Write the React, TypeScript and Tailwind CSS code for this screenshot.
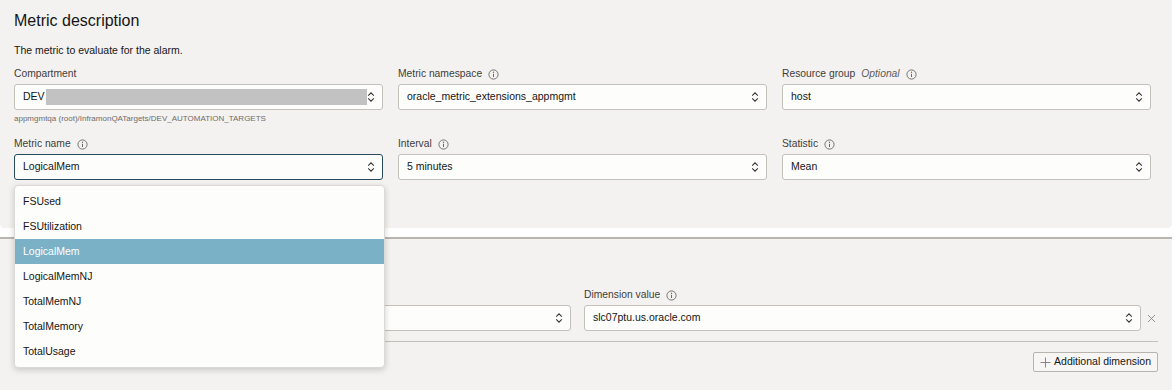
import React from "react";

const font = { fontFamily: '"Liberation Sans", Arial, sans-serif' };

function UpDown() {
  return (
    <svg width="8" height="12" viewBox="0 0 8 12" className="shrink-0">
      <path d="M1.2 4.6 L4 1.8 L6.8 4.6" fill="none" stroke="#3a3835" strokeWidth="1.1" />
      <path d="M1.2 7.4 L4 10.2 L6.8 7.4" fill="none" stroke="#3a3835" strokeWidth="1.1" />
    </svg>
  );
}

function Info() {
  return (
    <svg width="11" height="11" viewBox="0 0 11 11" className="shrink-0">
      <circle cx="5.5" cy="5.5" r="4.6" fill="none" stroke="#6b6864" strokeWidth="0.9" />
      <circle cx="5.5" cy="3.3" r="0.7" fill="#6b6864" />
      <path d="M5.5 4.8 V8" stroke="#6b6864" strokeWidth="1" />
    </svg>
  );
}

function Label({ text, info, optional }: { text?: string; info?: boolean; optional?: boolean }) {
  return (
    <div className="flex items-center gap-[6px] h-[12px] mb-[4px] text-[10.3px] leading-[12px] text-[#3f3d3a]">
      {text && <span>{text}</span>}
      {optional && <span className="italic text-[#5f5c58]">Optional</span>}
      {info && <Info />}
    </div>
  );
}

function Select({ value, focused, children }: { value?: string; focused?: boolean; children?: React.ReactNode }) {
  return (
    <div
      className={
        focused
          ? "flex items-center h-[26px] rounded-[3px] border-[1.5px] border-[#274a5c] bg-[#fdfdfc] pl-[8px] pr-[7px]"
          : "flex items-center h-[26px] rounded-[3px] border border-[#c4c0ba] bg-[#fdfdfc] pl-[8px] pr-[7px]"
      }
    >
      <div className="flex-1 flex items-center text-[10.5px] text-[#161513] overflow-hidden whitespace-nowrap">
        {children ?? value}
      </div>
      <UpDown />
    </div>
  );
}

const options = ["FSUsed", "FSUtilization", "LogicalMem", "LogicalMemNJ", "TotalMemNJ", "TotalMemory", "TotalUsage"];

export default function App() {
  return (
    <div className="w-[1175px] h-[390px] bg-white overflow-hidden" style={font}>
      {/* Metric description panel */}
      <div className="w-[1172px] bg-[#f3f2f1] rounded-b-[4px] px-[14px] pt-[11px] pb-[48px]">
        <h2 className="text-[16px] leading-[20px] text-[#161513]">Metric description</h2>
        <p className="mt-[12px] text-[10.5px] leading-[14px] text-[#161513]">The metric to evaluate for the alarm.</p>

        <div className="mt-[11px] grid grid-cols-3 gap-x-[15px] gap-y-[15px] w-[1137px]">
          <div>
            <Label text="Compartment" />
            <Select>
              <span>DEV</span>
              <span className="ml-[1px] h-[16px] w-[322px] bg-[#c2c2c2]" />
            </Select>
            <div className="mt-[4px] text-[8px] leading-[9px] text-[#6f6c68]">
              appmgmtqa (root)/InframonQATargets/DEV_AUTOMATION_TARGETS
            </div>
          </div>
          <div>
            <Label text="Metric namespace" info />
            <Select value="oracle_metric_extensions_appmgmt" />
          </div>
          <div>
            <Label text="Resource group" info optional />
            <Select value="host" />
          </div>

          <div className="relative">
            <Label text="Metric name" info />
            <Select value="LogicalMem" focused />
            {/* open listbox */}
            <div className="absolute left-0 top-[47px] z-10 w-[371px] rounded-[4px] border border-[#dcd9d5] bg-[#fdfdfc] py-[3px] shadow-[0_2px_6px_rgba(0,0,0,0.18)]">
              {options.map((o) => (
                <div
                  key={o}
                  className={
                    o === "LogicalMem"
                      ? "h-[25px] flex items-center pl-[8px] text-[10.5px] bg-[#7ab1c6] text-white"
                      : "h-[25px] flex items-center pl-[8px] text-[10.5px] text-[#161513]"
                  }
                >
                  {o}
                </div>
              ))}
            </div>
          </div>
          <div>
            <Label text="Interval" info />
            <Select value="5 minutes" />
          </div>
          <div>
            <Label text="Statistic" info />
            <Select value="Mean" />
          </div>
        </div>
      </div>

      {/* Metric dimensions panel (left part sits under the open listbox) */}
      <div className="mt-[9px] w-[1172px] h-[160px] bg-[#f3f2f1] border-t-2 border-[#bab5af] px-[14px] pt-[10px]">
        <div className="h-[20px]" />
        <div className="mt-[20px] w-[1144px] flex items-end">
          <div className="grid grid-cols-2 gap-x-[13px] w-[1127px]">
            <div>
              <Label />
              <Select />
            </div>
            <div>
              <Label text="Dimension value" info />
              <Select value="slc07ptu.us.oracle.com" />
            </div>
          </div>
          <div className="flex-1 h-[26px] flex items-center justify-end pr-[2px]">
            <svg width="9" height="9" viewBox="0 0 9 9">
              <path d="M1 1 L8 8 M8 1 L1 8" stroke="#8a8580" strokeWidth="0.9" />
            </svg>
          </div>
        </div>
        <div className="mt-[10px] w-[1144px] border-t border-[#c3bfb9]" />
        <div className="mt-[10px] w-[1144px] flex justify-end">
          <button className="h-[20px] flex items-center gap-[3px] px-[6px] rounded-[2px] border border-[#b8b4ae] bg-[#f7f6f5] text-[10.5px] text-[#161513]">
            <svg width="11" height="11" viewBox="0 0 11 11">
              <path d="M5.5 0.5 V10.5 M0.5 5.5 H10.5" stroke="#8a8580" strokeWidth="1" />
            </svg>
            Additional dimension
          </button>
        </div>
      </div>
    </div>
  );
}
